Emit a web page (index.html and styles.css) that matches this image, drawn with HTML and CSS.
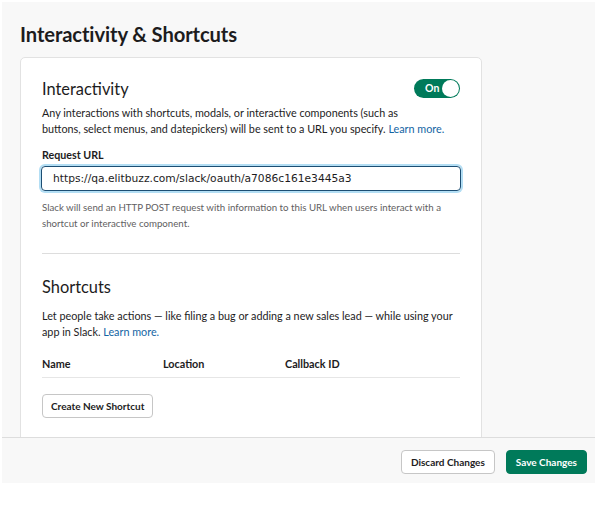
FILE: index.html
```html
<!DOCTYPE html>
<html>
<head>
<meta charset="utf-8">
<link rel="stylesheet" href="styles.css">
</head>
<body>
<div class="page">
  <main class="main">
    <h1 class="title">Interactivity &amp; Shortcuts</h1>
    <section class="card">
      <div class="head-row">
        <h2 class="heading">Interactivity</h2>
        <div class="toggle"><span class="toggle-label">On</span><span class="knob"></span></div>
      </div>
      <p class="text">Any interactions with shortcuts, modals, or interactive components (such as<br>buttons, select menus, and datepickers) will be sent to a URL you specify. <a class="link">Learn more.</a></p>
      <label class="label">Request URL</label>
      <div class="input">https://qa.elitbuzz.com/slack/oauth/a7086c161e3445a3</div>
      <p class="help">Slack will send an HTTP POST request with information to this URL when users interact with a shortcut or interactive component.</p>
      <hr class="divider">
      <h2 class="heading heading-2">Shortcuts</h2>
      <p class="text text-2">Let people take actions — like filing a bug or adding a new sales lead — while using your app in Slack. <a class="link">Learn more.</a></p>
      <div class="table-head">
        <span>Name</span><span>Location</span><span>Callback ID</span>
      </div>
      <button class="btn">Create New Shortcut</button>
    </section>
  </main>
  <footer class="footer">
    <button class="btn btn-footer">Discard Changes</button>
    <button class="btn btn-footer btn-primary">Save Changes</button>
  </footer>
</div>
</body>
</html>
```
FILE: styles.css
```css
* { box-sizing: border-box; }
html, body { margin: 0; padding: 0; background: #fff; }
body { font-family: Lato, "Noto Sans", sans-serif; color: #1d1c1d; }
.page {
  margin: 2px 2px 0 2px;
  width: 593px;
  height: 481px;
  background: #f8f8f8;
  display: flex;
  flex-direction: column;
}
.main {
  height: 435px;
  overflow: hidden;
  padding: 18px 0 0 18px;
}
.title {
  margin: 0;
  font-size: 20.2px;
  font-weight: 700;
  line-height: 28px;
  letter-spacing: -0.1px;
}
.card {
  margin-top: 9px;
  width: 462px;
  height: 500px;
  background: #fff;
  border: 1px solid #e2e2e2;
  border-radius: 5px;
  padding: 18px 21px 0 21px;
}
.head-row {
  display: flex;
  justify-content: space-between;
  align-items: center;
  height: 26px;
}
.heading {
  margin: 0;
  font-size: 16.4px;
  font-weight: 400;
  line-height: 26px;
}
.toggle {
  width: 46px;
  height: 19px;
  background: #007a5a;
  border-radius: 10px;
  display: flex;
  align-items: center;
  justify-content: space-between;
  padding: 0 1px 0 11px;
  margin-top: -2px;
}
.toggle-label { color: #fff; font-size: 10.5px; font-weight: 700; }
.knob {
  width: 17px; height: 17px;
  border-radius: 50%;
  background: #fff;
}
.text {
  margin: 3px 0 0 0;
  font-size: 10.8px;
  line-height: 16px;
}
.text-2 { margin-top: 8px; }
.link { color: #1264a3; text-decoration: none; }
.label {
  display: block;
  margin-top: 11px;
  font-size: 10.7px;
  font-weight: 700;
  line-height: 14px;
}
.input {
  margin-top: 4px;
  margin-left: -1px;
  width: 420px;
  height: 25px;
  border: 1px solid #1d4e73;
  border-radius: 4px;
  box-shadow: 0 0 0 2px #b3def4;
  font-family: "DejaVu Sans", Verdana, sans-serif;
  font-size: 10.7px;
  line-height: 23px;
  padding-left: 11px;
  color: #1d1c1d;
}
.help {
  margin: 8px 0 0 0;
  font-size: 9.7px;
  line-height: 16px;
  color: #616061;
}
.divider {
  margin: 22px 0 0 0;
  border: 0;
  border-top: 1px solid #dddddd;
}
.heading-2 { margin-top: 20px; }
.table-head {
  margin-top: 17px;
  display: grid;
  grid-template-columns: 121px 122px 1fr;
  font-size: 10.8px;
  font-weight: 700;
  line-height: 14px;
  padding-bottom: 6px;
  border-bottom: 1px solid #e6e6e6;
}
.btn {
  font-family: Lato, "Noto Sans", sans-serif;
  font-size: 10px;
  font-weight: 700;
  color: #1d1c1d;
  background: #fff;
  border: 1px solid #c6c6c6;
  border-radius: 4px;
  height: 24px;
  padding: 0 8px;
  margin-top: 16px;
  cursor: pointer;
}
.footer {
  height: 46px;
  border-top: 1px solid #dddddd;
  display: flex;
  justify-content: flex-end;
  align-items: center;
  gap: 11px;
  padding-right: 8px;
}
.btn-footer {
  margin-top: 2px;
  height: 24px;
  padding: 0 9px;
}
.btn-primary {
  background: #007a5a;
  border-color: #007a5a;
  color: #fff;
}
```
